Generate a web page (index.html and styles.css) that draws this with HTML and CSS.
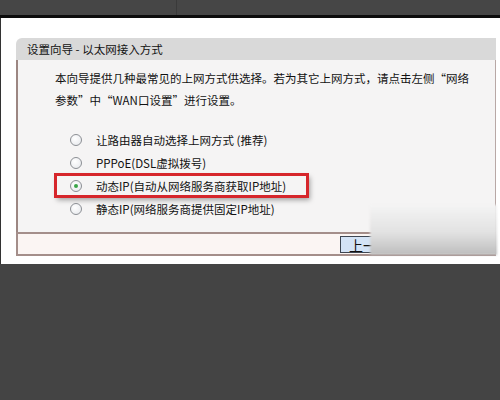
FILE: index.html
```html
<!DOCTYPE html>
<html lang="zh-CN">
<head>
    <meta charset="UTF-8">
    <title>设置向导 - 以太网接入方式</title>
    <link rel="stylesheet" href="styles.css">
</head>
<body>

    <div class="topbar">
        <div class="topbar-left"></div>
    </div>

    <div class="page">
        <div class="wizard">
            <div class="wizard-title">设置向导 - 以太网接入方式</div>

            <div class="wizard-body">
                <p class="intro">本向导提供几种最常见的上网方式供选择。若为其它上网方式，请点击左侧“网络参数”中“WAN口设置”进行设置。</p>

                <ul class="modes">
                    <li class="mode"><span class="radio"></span>让路由器自动选择上网方式 (推荐)</li>
                    <li class="mode"><span class="radio"></span>PPPoE(DSL虚拟拨号)</li>
                    <li class="mode marked"><span class="radio checked"></span>动态IP(自动从网络服务商获取IP地址)</li>
                    <li class="mode"><span class="radio"></span>静态IP(网络服务商提供固定IP地址)</li>
                </ul>
            </div>

            <div class="wizard-footer">
                <button class="prev-button">上一步</button>
            </div>
        </div>

        <!-- размытое пятно поверх кнопок -->
        <div class="smudge"></div>
    </div>

</body>
</html>
```

FILE: styles.css
```css
body {
    margin: 0;
    background-color: #444;
    font-family: 'Noto Sans CJK SC', 'DejaVu Sans', sans-serif;
    color: #111;
}

.topbar {
    height: 15px;
    background-color: #464646;
    border-bottom: 3px solid #0c0c0c;
}

.topbar-left {
    width: 176px;
    height: 15px;
    border-right: 1px solid #3a3a3a;
}

.page {
    position: relative;
    height: 226px;
    padding: 20px 4px 0 16px;
    background-color: #fff;
    border-left: 1px solid #333;
}

.wizard {
    width: 480px;
    margin-left: -1px;
}

.wizard-title {
    height: 22px;
    line-height: 22px;
    padding-left: 11px;
    background-color: #d9d9d9;
    border-radius: 6px 0 0 0;
    font-size: 11.5px;
}

.wizard-body {
    height: 172px;
    background-color: #f5f4f4;
    border-left: 2px solid #9c8682;
    border-right: 1px solid #b8a8a6;
    box-sizing: border-box;
    padding-top: 7px;
}

.intro {
    margin: 0;
    padding: 0 18px 0 37px;
    font-size: 11.5px;
    line-height: 22px;
}

.modes {
    list-style-type: none;
    margin: 17px 0 0 37px;
    padding: 0;
}

.mode {
    display: flex;
    align-items: center;
    width: 253px;
    height: 23px;
    padding-left: 15px;
    box-sizing: border-box;
    font-size: 11.5px;
}

.mode.marked {
    outline: 3px solid #d6262b;
    outline-offset: -2px;
    box-shadow: 2px 3px 5px rgba(0, 0, 0, 0.35);
}

.radio {
    width: 10px;
    height: 10px;
    margin-right: 14px;
    border: 1px solid #8c8f94;
    border-radius: 50%;
    background: radial-gradient(circle at 40% 35%, #fff, #e4e6ea);
    position: relative;
    flex-shrink: 0;
}

.radio.checked::after {
    content: '';
    position: absolute;
    left: 3px;
    top: 3px;
    width: 4px;
    height: 4px;
    border-radius: 50%;
    background-color: #3aa548;
}

.wizard-footer {
    height: 18px;
    padding-top: 2px;
    background-color: #fbf5f3;
    border: 2px solid #a48e8a;
    border-right: 1px solid #b8a8a6;
    padding-left: 322px;
}

.prev-button {
    display: block;
    width: 70px;
    height: 17px;
    padding: 0 0 0 8px;
    text-align: left;
    background-color: #d3e3f6;
    border: 1px solid #3d4652;
    font-family: 'Noto Sans CJK SC', sans-serif;
    font-size: 14px;
    line-height: 14px;
    color: #111;
}

.smudge {
    position: absolute;
    left: 369px;
    top: 187px;
    width: 127px;
    height: 50px;
    background: linear-gradient(180deg, #f4f4f4 0%, #e2e2e2 55%, #bdbdbd 100%);
    filter: blur(1px);
}
```
